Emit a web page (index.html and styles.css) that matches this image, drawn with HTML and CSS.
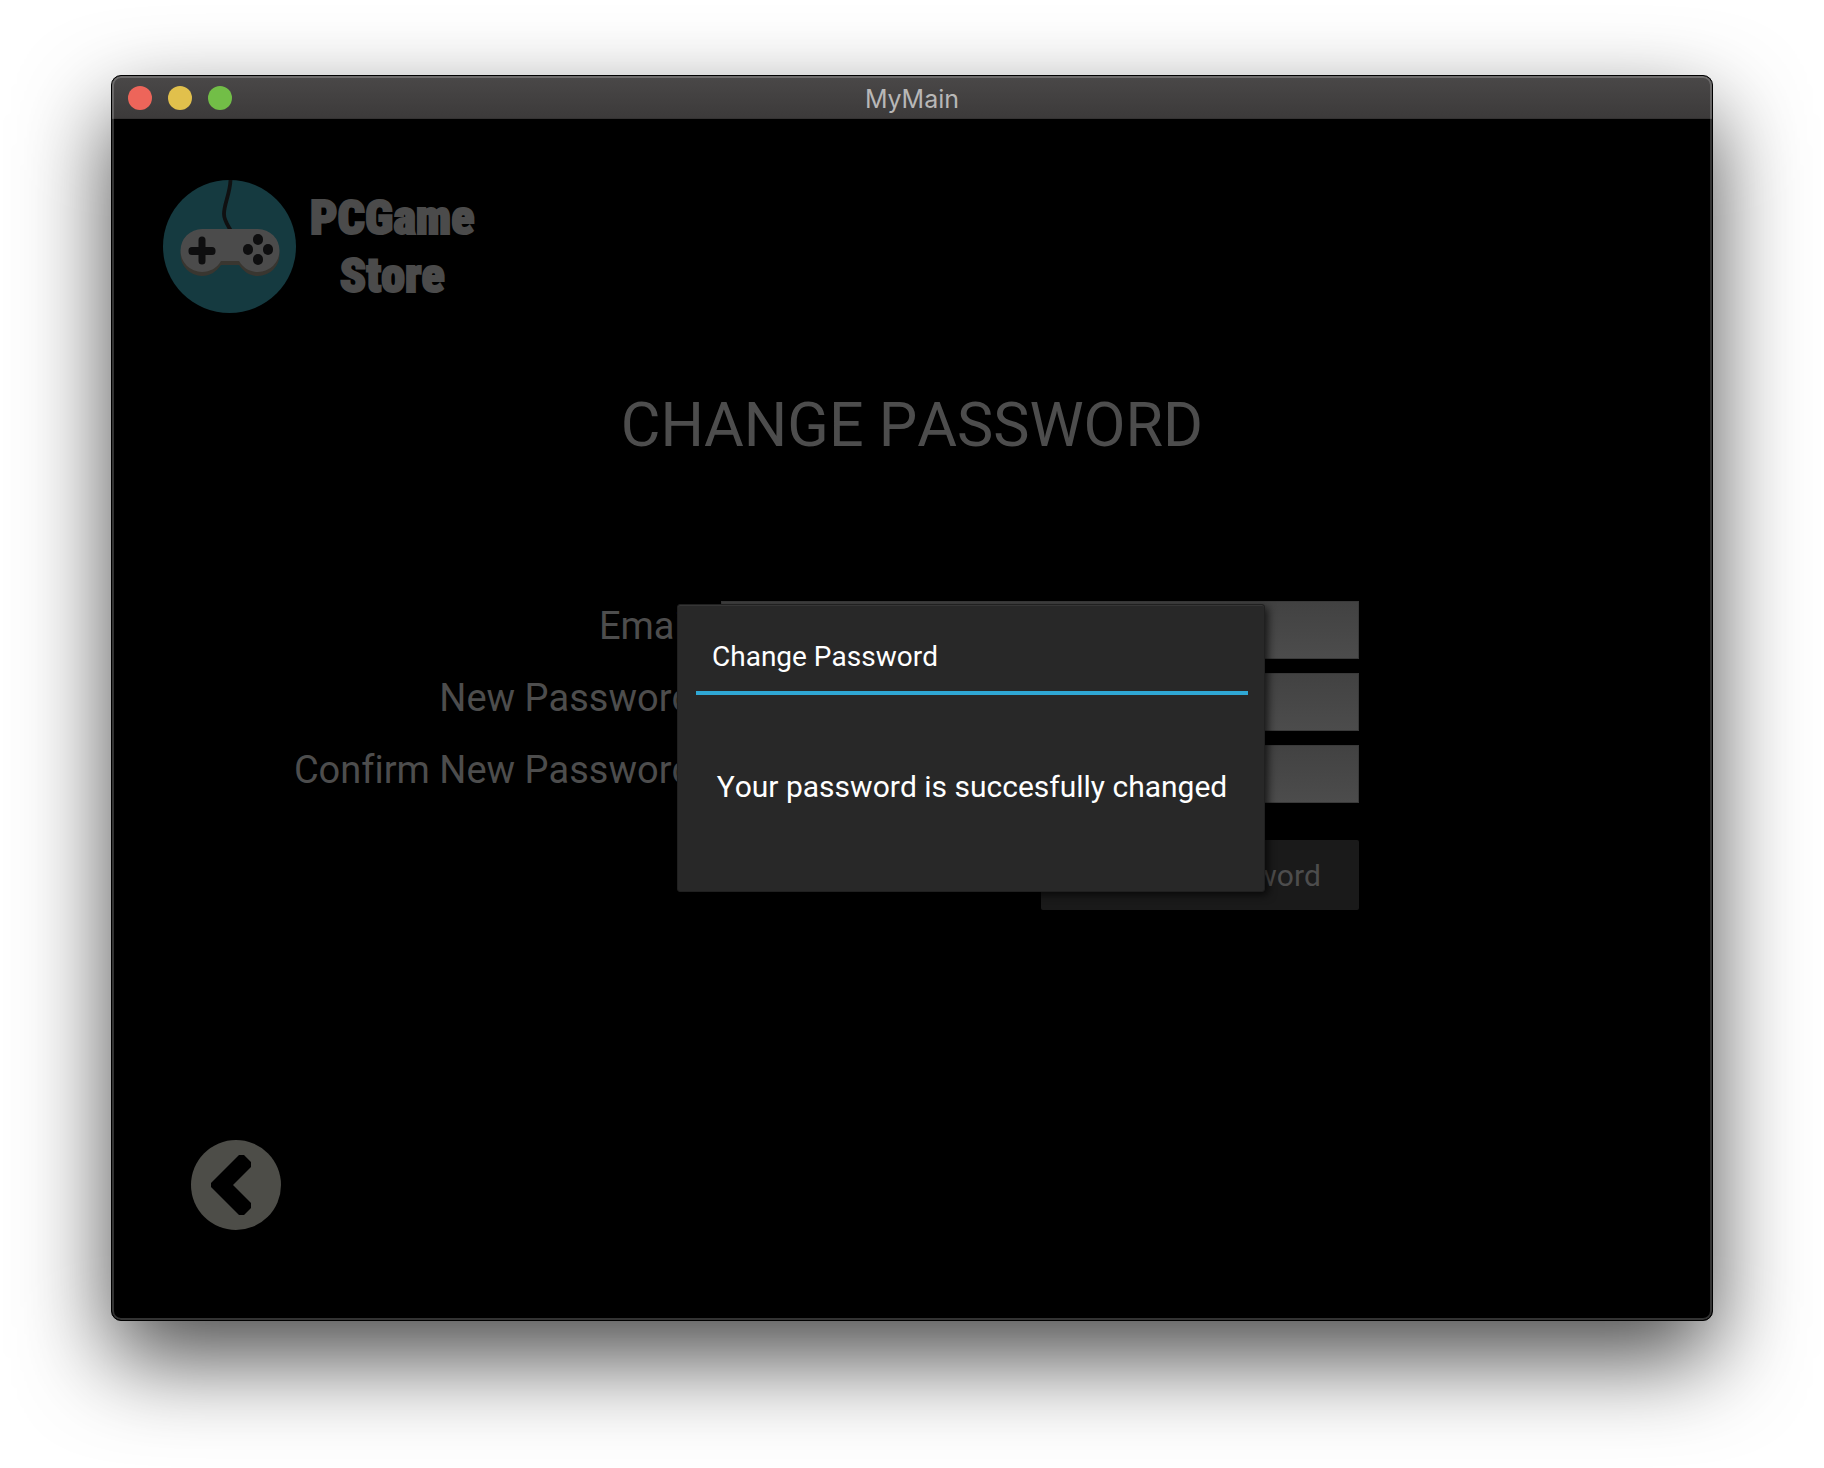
FILE: index.html
```html
<!DOCTYPE html>
<html lang="en">
<head>
<meta charset="utf-8">
<title>MyMain</title>
<link rel="stylesheet" href="styles.css">
</head>
<body>
<div class="window">
  <header class="titlebar">
    <div class="controls">
      <button class="control control-close" type="button" aria-label="Close"></button>
      <button class="control control-minimize" type="button" aria-label="Minimize"></button>
      <button class="control control-zoom" type="button" aria-label="Zoom"></button>
    </div>
    <span class="window-title">MyMain</span>
  </header>
  <main class="screen">
    <div class="brand">
      <svg class="brand-mark" viewBox="0 0 133 133" aria-hidden="true">
        <circle cx="66.500" cy="66.500" r="66.500" fill="#153a40"/>
        <path d="M67.500 0C67 14 61 24 61 34C61 40 64 44 67.500 50" fill="none" stroke="#101011" stroke-width="3.800"/>
        <path d="M39 53h56a21.500 21.500 0 0 1 0 43c-8 0-14-4-19-11H58c-5 7-11 11-19 11a21.500 21.500 0 0 1 0-43z" fill="#393630"/>
        <path d="M39 49h56a21.500 21.500 0 0 1 0 43c-8 0-15-4-19-11H58c-4 7-11 11-19 11a21.500 21.500 0 0 1 0-43z" fill="#4b4b4b"/>
        <path d="M35.500 60a3.500 3.500 0 0 1 7 0v7h6.500a3.500 3.500 0 0 1 3.500 3.500v1a3.500 3.500 0 0 1-3.500 3.500h-6.500v6a3.500 3.500 0 0 1-7 0v-6h-6.500a3.500 3.500 0 0 1-3.500-3.500v-1a3.500 3.500 0 0 1 3.500-3.500h6.500z" fill="#0e0e0f"/>
        <g fill="#0e0e0f">
          <rect x="90" y="54" width="10" height="11" rx="5"/>
          <rect x="90" y="74" width="10" height="11" rx="5"/>
          <rect x="80" y="64" width="10" height="11" rx="5"/>
          <rect x="100" y="64" width="10" height="11" rx="5"/>
        </g>
      </svg>
      <p class="brand-name">PCGame<br>Store</p>
    </div>
    <h1 class="heading">CHANGE PASSWORD</h1>
    <form class="form">
      <label class="label" for="email">Email</label>
      <input class="field" id="email" type="email">
      <label class="label" for="new-password">New Password</label>
      <input class="field" id="new-password" type="password">
      <label class="label" for="confirm-password">Confirm New Password</label>
      <input class="field" id="confirm-password" type="password">
      <button class="submit" type="submit">Change Password</button>
    </form>
    <button class="back" type="button" aria-label="Back">
      <svg class="back-icon" viewBox="0 0 90 90" aria-hidden="true">
        <circle cx="45" cy="45" r="45" fill="#4d4d48"/>
        <path d="M48 15h5l7 7v5L42 45l18 18v5l-7 7h-5L20 47v-4z" fill="#000"/>
      </svg>
    </button>
    <section class="popup" role="dialog" aria-labelledby="popup-title">
      <h2 class="popup-title" id="popup-title">Change Password</h2>
      <p class="popup-message">Your password is succesfully changed</p>
    </section>
  </main>
</div>
</body>
</html>
```
FILE: styles.css
```css
* {
  box-sizing: border-box;
}

body {
  display: flex;
  min-height: 100vh;
  margin: 0;
  padding: 75px 111px 147px;
  background: #fff;
  font-family: Roboto, sans-serif;
  font-kerning: none;
  font-variant-ligatures: none;
}

.window {
  position: relative;
  display: flex;
  flex: 1;
  flex-direction: column;
  border: 1px solid #000;
  border-radius: 10px;
  background: #000;
  box-shadow: 0 38px 90px rgba(0, 0, 0, 0.7);
  overflow: hidden;
}

.window::after {
  content: "";
  position: absolute;
  inset: 0;
  border: 2px solid rgba(255, 255, 255, 0.2);
  border-radius: 9px;
  pointer-events: none;
}

.titlebar {
  display: grid;
  grid-template-columns: 1fr auto 1fr;
  align-items: center;
  height: 43px;
  padding: 2px 16px 0;
  border-bottom: 1px solid #343232;
  background: linear-gradient(#4a4848, #3c3a3a);
}

.controls {
  display: flex;
  gap: 16px;
}

.control {
  width: 24px;
  height: 24px;
  padding: 0;
  border: 0;
  border-radius: 50%;
}

.control-close {
  background: #ed655a;
}

.control-minimize {
  background: #e1c04c;
}

.control-zoom {
  background: #72be47;
}

.window-title {
  padding-top: 2px;
  color: #b8b7b7;
  font-family: Inter, sans-serif;
  font-size: 25px;
  line-height: 32px;
}

.screen {
  position: relative;
  display: flex;
  flex: 1;
  flex-direction: column;
  color: #4d4d4d;
}

.brand {
  display: flex;
  align-items: center;
  gap: 14px;
  margin: 61px 51px 0;
}

.brand-mark {
  width: 133px;
  height: 133px;
}

.brand-name {
  margin: 0;
  color: #4b4b4b;
  font-family: "Roboto Condensed", Impact, Anton, Roboto, sans-serif;
  font-size: 48px;
  font-weight: 900;
  line-height: 58px;
  text-align: center;
  -webkit-text-stroke: 2px #4b4b4b;
}

.heading {
  margin: 76px 0 140px;
  font-size: 61px;
  font-weight: 400;
  line-height: 72px;
  text-align: center;
}

.form {
  display: grid;
  grid-template-columns: 581fr 638fr 325fr;
  gap: 14px 28px;
}

.label {
  grid-column: 1;
  font-size: 38px;
  line-height: 50px;
  text-align: right;
  white-space: nowrap;
}

.field {
  width: 100%;
  height: 58px;
  padding: 0 12px;
  border: 1px solid #3a3a3a;
  background: linear-gradient(#424242, #4c4c4c);
  color: #000;
  font: inherit;
}

.submit {
  grid-column: 2;
  justify-self: end;
  width: 318px;
  height: 70px;
  margin-top: 23px;
  border: 0;
  border-radius: 2px;
  background: #1a1a1a;
  color: #4d4d4d;
  font: inherit;
  font-size: 30px;
}

.back {
  width: 90px;
  height: 90px;
  margin: auto 79px 90px;
  padding: 0;
  border: 0;
  background: none;
}

.back-icon {
  display: block;
}

.popup {
  position: absolute;
  top: 485px;
  left: calc(50% - 235px);
  width: 588px;
  height: 288px;
  padding: 29px 16px 28px 18px;
  border: 1px solid #202020;
  border-radius: 3px;
  background: #282828;
  box-shadow: inset 0 1px #363636, 3px 3px 8px rgba(0, 0, 0, 0.7);
  color: #fff;
}

.popup-title {
  margin: 0;
  padding: 6px 16px 17px;
  border-bottom: 4px solid #2fa7d4;
  font-size: 28px;
  font-weight: 400;
  line-height: 34px;
}

.popup-message {
  margin: 74px 0 0;
  font-size: 30px;
  line-height: 36px;
  text-align: center;
}
```
